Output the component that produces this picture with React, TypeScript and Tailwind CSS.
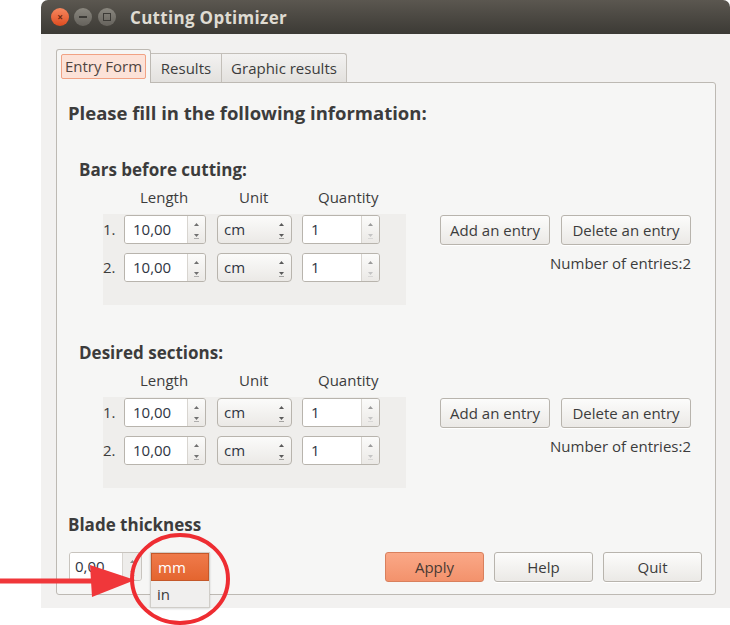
import React from "react";

function Arrows({ up = "#707070", down = "#707070" }: { up?: string; down?: string }) {
  return (
    <svg width="7" height="22" viewBox="0 0 7 22">
      <path d="M1 7 L3.5 4 L6 7 Z" fill={up} />
      <path d="M1 15 L3.5 18 L6 15 Z" fill={down} />
      <path d="M1 19.5 H6" stroke={down} strokeWidth="1" opacity="0.5" />
    </svg>
  );
}

function SpinBox({ value, width, up, down }: { value: string; width: string; up?: string; down?: string }) {
  return (
    <div className={`flex h-[29px] ${width} overflow-hidden rounded-[3px] border border-[#b8b4ad] shadow-[inset_0_1px_0_#ddd]`}>
      <div className="flex-1 bg-white pl-[8px] text-[15px] leading-[27px] text-[#2f3542]">{value}</div>
      <div className="flex w-[18px] items-center justify-center border-l border-[#d8d5d0] bg-gradient-to-b from-[#fbfbfa] to-[#ebe9e6]">
        <Arrows up={up} down={down} />
      </div>
    </div>
  );
}

function Combo({ value }: { value: string }) {
  return (
    <div className="flex h-[29px] w-[75px] items-center justify-between rounded-[4px] border border-[#b8b4ad] bg-gradient-to-b from-[#fbfbfa] to-[#ebe9e6] pl-[6px] pr-[6px] text-[15px] text-[#2f3542]">
      <span>{value}</span>
      <Arrows up="#5a5a5a" down="#5a5a5a" />
    </div>
  );
}

function Button({ children, width, primary }: { children: React.ReactNode; width: string; primary?: boolean }) {
  return (
    <div
      className={`flex h-[30px] ${width} items-center justify-center rounded-[3px] border text-[15px] ${
        primary
          ? "border-[#d9805d] bg-gradient-to-b from-[#faa887] to-[#f3926c] text-[#4a3a34]"
          : "border-[#b8b4ad] bg-gradient-to-b from-[#fcfcfb] to-[#ebe9e6] text-[#3c3c3c] shadow-[0_1px_0_#fff]"
      }`}
    >
      {children}
    </div>
  );
}

function EntrySection({ title }: { title: string }) {
  return (
    <div>
      <div className="ml-[22px] h-[22px] text-[17px] font-bold leading-[22px] text-[#3c3c3c]">{title}</div>
      <div className="ml-[46px] mt-[6px] flex h-[20px] text-[15px] leading-[20px] text-[#3c3c3c]">
        <div className="ml-[37px] w-[99px]">Length</div>
        <div className="w-[79px]">Unit</div>
        <div>Quantity</div>
      </div>
      <div className="ml-[46px] mt-[7px] flex">
        <div className="flex h-[91px] w-[303px] flex-col gap-[9px] bg-[#efeeec] pt-[1px]">
          {["1.", "2."].map((n) => (
            <div key={n} className="flex items-center">
              <div className="w-[21px] text-[15px] text-[#3c3c3c]">{n}</div>
              <SpinBox value="10,00" width="w-[82px]" />
              <div className="ml-[11px]">
                <Combo value="cm" />
              </div>
              <div className="ml-[10px]">
                <SpinBox value="1" width="w-[78px]" up="#9a9a9a" down="#c4c4c4" />
              </div>
            </div>
          ))}
        </div>
        <div className="ml-[34px] mt-[1px] flex flex-col items-end">
          <div className="flex gap-[11px]">
            <Button width="w-[110px]">Add an entry</Button>
            <Button width="w-[130px]">Delete an entry</Button>
          </div>
          <div className="mt-[8px] text-[15px] leading-[20px] text-[#3c3c3c]">Number of entries:2</div>
        </div>
      </div>
    </div>
  );
}

export default function App() {
  return (
    <div className="relative h-[625px] w-[730px] overflow-hidden bg-white font-['Open_Sans','Noto_Sans',sans-serif]">
      <div className="ml-[41px] flex h-[608px] w-[689px] flex-col">
        {/* title bar */}
        <div className="flex h-[34px] items-center rounded-t-[7px] bg-gradient-to-b from-[#5b5750] to-[#3c3a35] pl-[10px]">
          <div className="flex h-[18px] w-[18px] items-center justify-center rounded-full bg-gradient-to-b from-[#f5875e] to-[#dd4b1d] text-[10px] font-bold leading-none text-[#6b2a12]">
            ×
          </div>
          <div className="ml-[5px] flex h-[18px] w-[18px] items-center justify-center rounded-full bg-gradient-to-b from-[#8a877f] to-[#65625c]">
            <div className="h-[2px] w-[8px] bg-[#3c3a36]" />
          </div>
          <div className="ml-[6px] flex h-[18px] w-[18px] items-center justify-center rounded-full bg-gradient-to-b from-[#8a877f] to-[#65625c]">
            <div className="h-[8px] w-[8px] border border-[#3c3a36]" />
          </div>
          <div className="ml-[14px] pt-[2px] text-[17px] font-bold tracking-[0.3px] text-[#dfdbd2]">Cutting Optimizer</div>
        </div>

        {/* window body */}
        <div className="flex flex-1 flex-col bg-[#f2f1f0] px-[15px] pb-[13px] pr-[14px] pt-[15px]">
          {/* tabs */}
          <div className="relative z-10 flex h-[33px] items-end">
            <div className="-mb-px h-[34px] w-[95px] rounded-t-[3px] border border-b-0 border-[#bdb9b3] bg-[#f6f6f5] px-[4px] pt-[4px]">
              <div className="flex h-[25px] items-center justify-center rounded-[2px] border border-[#f1a284] bg-[#fce2d8] text-[15px] text-[#4f4541]">
                Entry Form
              </div>
            </div>
            <div className="flex h-[29px] w-[71px] items-center justify-center border border-b-0 border-l-0 border-[#c3bfb9] bg-gradient-to-b from-[#f3f2f1] to-[#e3e1de] text-[15px] text-[#3c3c3c]">
              Results
            </div>
            <div className="flex h-[29px] w-[125px] items-center justify-center rounded-tr-[3px] border border-b-0 border-l-0 border-[#c3bfb9] bg-gradient-to-b from-[#f3f2f1] to-[#e3e1de] text-[15px] text-[#3c3c3c]">
              Graphic results
            </div>
          </div>

          {/* panel */}
          <div className="flex-1 rounded-b-[3px] rounded-tr-[3px] border border-[#bdb9b3] bg-[#f6f6f5]">
            <div className="ml-[11px] mt-[18px] h-[24px] text-[18.5px] font-bold leading-[24px] text-[#3c3c3c]">
              Please fill in the following information:
            </div>
            <div className="mt-[34px]">
              <EntrySection title="Bars before cutting:" />
            </div>
            <div className="mt-[37px]">
              <EntrySection title="Desired sections:" />
            </div>
            <div className="ml-[11px] mt-[26px] h-[22px] text-[17px] font-bold leading-[22px] text-[#3c3c3c]">
              Blade thickness
            </div>
            <div className="mt-[16px] flex items-start">
              <div className="ml-[12px]">
                <div className="flex h-[29px] w-[73px] overflow-hidden rounded-[3px] border border-[#c8c4be]">
                  <div className="flex-1 bg-white pl-[5px] text-[15px] leading-[27px] text-[#2f3542]">0,00</div>
                  <div className="flex w-[19px] items-center justify-center border-l border-[#d8d5d0] bg-[#eeedeb]">
                    <Arrows up="#8a8a8a" down="#b0b0b0" />
                  </div>
                </div>
              </div>
              <div className="relative ml-[8px] h-[29px] w-[60px]">
                <div className="absolute left-0 top-0 z-20 w-[60px] border border-[#d0cdc8] bg-[#f0efee] shadow-[0_1px_2px_rgba(0,0,0,0.15)]">
                  <div className="flex h-[28px] items-center border border-[#c4582a] bg-gradient-to-b from-[#ef7a4a] to-[#e4652f] pl-[6px] text-[15px] text-white">
                    mm
                  </div>
                  <div className="flex h-[26px] items-center pl-[6px] text-[15px] text-[#3c3c3c]">in</div>
                </div>
              </div>
              <div className="ml-[175px] flex gap-[10px]">
                <Button width="w-[99px]" primary>
                  Apply
                </Button>
                <Button width="w-[99px]">Help</Button>
                <Button width="w-[99px]">Quit</Button>
              </div>
            </div>
          </div>
        </div>
      </div>

      {/* red annotation */}
      <svg className="pointer-events-none absolute left-0 top-0 z-30" width="730" height="625">
        <line x1="0" y1="581" x2="100" y2="581" stroke="#f0373a" strokeWidth="5" />
        <path d="M90 565 L92 597 L135 580 Z" fill="#f0373a" />
        <ellipse cx="180" cy="579" rx="48" ry="44" fill="none" stroke="#ee2d32" strokeWidth="4" />
      </svg>
    </div>
  );
}
